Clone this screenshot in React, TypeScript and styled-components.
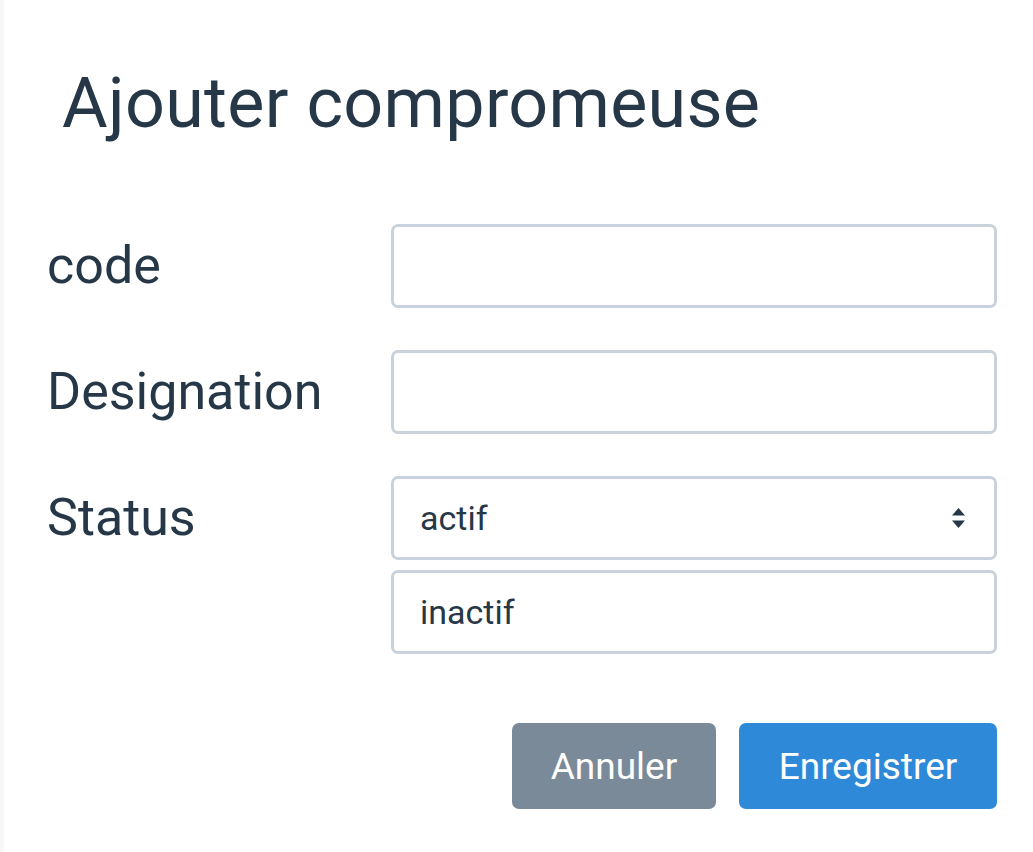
import React from "react";
import styled, { createGlobalStyle } from "styled-components";

const Global = createGlobalStyle`
  html, body { margin: 0; padding: 0; background: #ffffff; }
  body { font-family: Roboto, "Noto Sans", sans-serif; color: #263747; }
`;

const Page = styled.div`
  width: 1033px;
  height: 852px;
  box-sizing: border-box;
  border-left: 4px solid #f6f7f8;
  background: #ffffff;
  padding: 62px 36px 0 43px;
`;

const Title = styled.h1`
  margin: 0 0 0 15px;
  font-size: 70px;
  font-weight: 400;
  line-height: 82px;
  letter-spacing: 0.3px;
  color: #263747;
`;

const Form = styled.form`
  margin-top: 80px;
  display: grid;
  grid-template-columns: 344px 1fr;
  row-gap: 42px;
  align-items: start;
`;

const Label = styled.label`
  font-size: 52px;
  line-height: 84px;
  height: 84px;
  color: #263747;
`;

const Field = styled.div`
  display: flex;
  flex-direction: column;
  gap: 10px;
`;

const Box = styled.div`
  box-sizing: border-box;
  height: 84px;
  border: 3px solid #c9d1da;
  border-radius: 7px;
  background: #fff;
  display: flex;
  align-items: center;
  justify-content: space-between;
  padding: 0 28px 0 26px;
  font-size: 34px;
  color: #263747;
`;

const Actions = styled.div`
  margin-top: 69px;
  display: flex;
  justify-content: flex-end;
  gap: 23px;
`;

const Button = styled.button<{ $primary?: boolean }>`
  height: 86px;
  width: ${(p) => (p.$primary ? "258px" : "204px")};
  border: none;
  border-radius: 7px;
  background: ${(p) => (p.$primary ? "#2e89d9" : "#7b8a99")};
  color: #ffffff;
  font-family: Roboto, "Noto Sans", sans-serif;
  font-size: 37px;
  padding: 0;
`;

const Caret = () => (
  <svg width="15" height="22" viewBox="0 0 15 22">
    <path d="M7.5 1 L14 8.5 H1 Z" fill="#263747" />
    <path d="M7.5 21 L14 13.5 H1 Z" fill="#263747" />
  </svg>
);

export default function App() {
  return (
    <>
      <Global />
      <Page>
        <Title>Ajouter compromeuse</Title>
        <Form>
          <Label>code</Label>
          <Field>
            <Box />
          </Field>
          <Label>Designation</Label>
          <Field>
            <Box />
          </Field>
          <Label>Status</Label>
          <Field>
            <Box>
              <span>actif</span>
              <Caret />
            </Box>
            <Box>
              <span>inactif</span>
            </Box>
          </Field>
        </Form>
        <Actions>
          <Button type="button">Annuler</Button>
          <Button type="button" $primary>
            Enregistrer
          </Button>
        </Actions>
      </Page>
    </>
  );
}
